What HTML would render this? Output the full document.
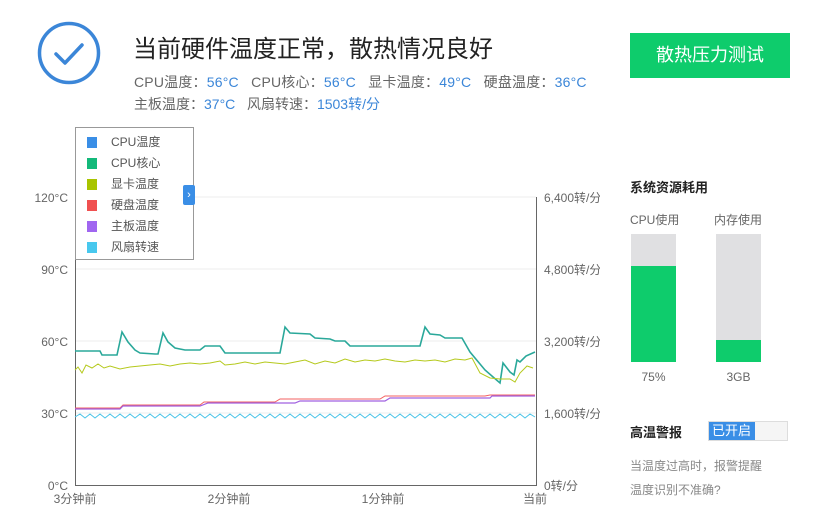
<!DOCTYPE html>
<html><head><meta charset="utf-8"><style>
body{margin:0;width:820px;height:530px;background:#fff;font-family:"Liberation Sans","Noto Sans CJK SC",sans-serif;position:relative;overflow:hidden;color:#666}
.a{position:absolute;white-space:nowrap}
.b{color:#3b86d8}
.lg div{height:21px;line-height:21px;font-size:12px;color:#555;padding-left:35px;position:relative}
.lg i{position:absolute;left:11px;top:5px;width:10px;height:11px}
</style></head><body>
<svg class="a" style="left:36px;top:20px" width="66" height="66"><circle cx="33" cy="33" r="29.5" fill="none" stroke="#3b86d8" stroke-width="3.5"/><path d="M20 34 L29 43 L46 25" fill="none" stroke="#3b86d8" stroke-width="3.5" stroke-linecap="round" stroke-linejoin="round"/></svg>
<div class="a" style="left:133px;top:29px;font-size:24px;color:#222">当前硬件温度正常，散热情况良好</div>
<div class="a" style="left:134px;top:72px;font-size:14px;letter-spacing:0.2px">CPU温度：<span class="b">56°C</span>&nbsp;&nbsp;&nbsp;CPU核心：<span class="b">56°C</span>&nbsp;&nbsp;&nbsp;显卡温度：<span class="b">49°C</span>&nbsp;&nbsp;&nbsp;硬盘温度：<span class="b">36°C</span></div>
<div class="a" style="left:134px;top:94px;font-size:14px">主板温度：<span class="b">37°C</span>&nbsp;&nbsp;&nbsp;风扇转速：<span class="b">1503转/分</span></div>
<div class="a" style="left:630px;top:33px;width:160px;height:45px;background:#0ecc6c;color:#fff;font-size:18px;text-align:center;line-height:45px">散热压力测试</div>

<svg class="a" style="left:0;top:180px" width="600" height="330">
<g font-size="12" fill="#666" font-family="Liberation Sans,Noto Sans CJK SC,sans-serif">
<text x="68" y="22" text-anchor="end">120°C</text><text x="68" y="94" text-anchor="end">90°C</text><text x="68" y="166" text-anchor="end">60°C</text><text x="68" y="238" text-anchor="end">30°C</text><text x="68" y="310" text-anchor="end">0°C</text>
<text x="544" y="22">6,400转/分</text><text x="544" y="94">4,800转/分</text><text x="544" y="166">3,200转/分</text><text x="544" y="238">1,600转/分</text><text x="544" y="310">0转/分</text>
<text x="75" y="323" text-anchor="middle">3分钟前</text><text x="229" y="323" text-anchor="middle">2分钟前</text><text x="383" y="323" text-anchor="middle">1分钟前</text><text x="535" y="323" text-anchor="middle">当前</text>
</g>
<g stroke="#eee"><line x1="75" y1="17" x2="536" y2="17"/><line x1="75" y1="89" x2="536" y2="89"/><line x1="75" y1="161" x2="536" y2="161"/><line x1="75" y1="233" x2="536" y2="233"/></g>
<path d="M75.5 17V305.5H536.5V17" fill="none" stroke="#666"/>
<polyline fill="none" stroke="#2aa89a" stroke-width="1.6" points="75,171 100,171 102,175 117,175 122,152 128,162 135,170 140,173 155,174 158,174 163,153 168,162 175,168 185,170 200,170 205,166 220,166 225,173 280,173 285,147 290,153 310,154 315,158 330,159 335,161 345,161 350,166 420,166 425,147 430,154 440,155 445,158 462,158 470,172 485,190 500,203 503,183 510,192 514,195 517,180 520,182 526,176 535,172"/>
<polyline fill="none" stroke="#b5c91c" stroke-width="1" points="75,190 78,187 82,193 86,185 92,188 98,184 104,188 110,186 120,189 130,187 140,186 150,185 160,184 170,186 180,184 190,183 200,184 210,183 220,181 225,185 235,184 245,182 255,184 265,182 275,183 285,184 295,182 305,180 315,184 325,181 335,183 345,179 355,182 365,180 375,181 385,179 395,181 405,182 415,180 425,181 435,180 445,182 455,179 465,180 472,178 480,193 490,198 500,199 510,199 515,202 520,193 527,186 533,188"/>
<polyline fill="none" stroke="#f36060" stroke-width="1" points="75,228 120,228 123,225 200,225 204,222 275,222 280,219 380,219 385,216 485,216 490,215 535,215"/>
<polyline fill="none" stroke="#a060e0" stroke-width="1.2" points="75,229 120,229 123,226 200,226 208,223 295,223 300,221 385,221 390,218 490,218 492,216 535,216"/>
<polyline fill="none" stroke="#4ac4e8" stroke-width="1" points="75,237 80,234 85,238 90,234 95,238 100,234 105,238 110,234 115,238 120,234 125,238 130,234 135,238 140,234 145,238 150,234 155,238 160,234 165,238 170,234 175,238 180,234 185,238 190,234 195,238 200,234 205,238 210,234 215,238 220,234 225,238 230,234 235,238 240,234 245,238 250,234 255,238 260,234 265,238 270,234 275,238 280,234 285,238 290,234 295,238 300,234 305,238 310,234 315,238 320,234 325,238 330,234 335,238 340,234 345,238 350,234 355,238 360,234 365,238 370,234 375,238 380,234 385,238 390,234 395,238 400,234 405,238 410,234 415,238 420,234 425,238 430,234 435,238 440,234 445,238 450,234 455,238 460,234 465,238 470,234 475,238 480,234 485,238 490,234 495,238 500,234 505,238 510,234 515,238 520,234 525,238 530,234 535,237"/>
</svg>
<div class="a lg" style="left:75px;top:127px;width:119px;height:133px;border:1px solid #999;background:#fff;padding-top:4px;box-sizing:border-box">
<div><i style="background:#3a8ee6"></i>CPU温度</div><div><i style="background:#13b97a"></i>CPU核心</div><div><i style="background:#a8c400"></i>显卡温度</div><div><i style="background:#f05050"></i>硬盘温度</div><div><i style="background:#a066f0"></i>主板温度</div><div><i style="background:#48c8ee"></i>风扇转速</div>
</div>
<div class="a" style="left:183px;top:185px;width:12px;height:20px;background:#3a8ee6;color:#fff;font-size:11px;text-align:center;line-height:20px;border-radius:2px">›</div>

<div class="a" style="left:630px;top:177px;font-size:13px;font-weight:bold;color:#222">系统资源耗用</div>
<div class="a" style="left:630px;top:211px;font-size:12px">CPU使用</div>
<div class="a" style="left:714px;top:211px;font-size:12px">内存使用</div>
<div class="a" style="left:631px;top:234px;width:45px;height:128px;background:#e0e0e2"><div style="position:absolute;bottom:0;width:45px;height:96px;background:#0ecc6c"></div></div>
<div class="a" style="left:716px;top:234px;width:45px;height:128px;background:#e0e0e2"><div style="position:absolute;bottom:0;width:45px;height:22px;background:#0ecc6c"></div></div>
<div class="a" style="left:630px;top:370px;width:47px;text-align:center;font-size:12px">75%</div>
<div class="a" style="left:715px;top:370px;width:47px;text-align:center;font-size:12px">3GB</div>
<div class="a" style="left:630px;top:422px;font-size:13px;font-weight:bold;color:#222">高温警报</div>
<div class="a" style="left:708px;top:421px;width:80px;height:20px;border:1px solid #ddd;box-sizing:border-box;background:#f5f5f5"><div style="width:46px;height:18px;background:#3a8ee6;color:#fff;font-size:13px;line-height:18px;padding-left:3px;box-sizing:border-box">已开启</div></div>
<div class="a" style="left:630px;top:457px;font-size:12px;color:#888">当温度过高时，报警提醒</div>
<div class="a" style="left:630px;top:481px;font-size:12px;color:#888">温度识别不准确?</div>
</body></html>
